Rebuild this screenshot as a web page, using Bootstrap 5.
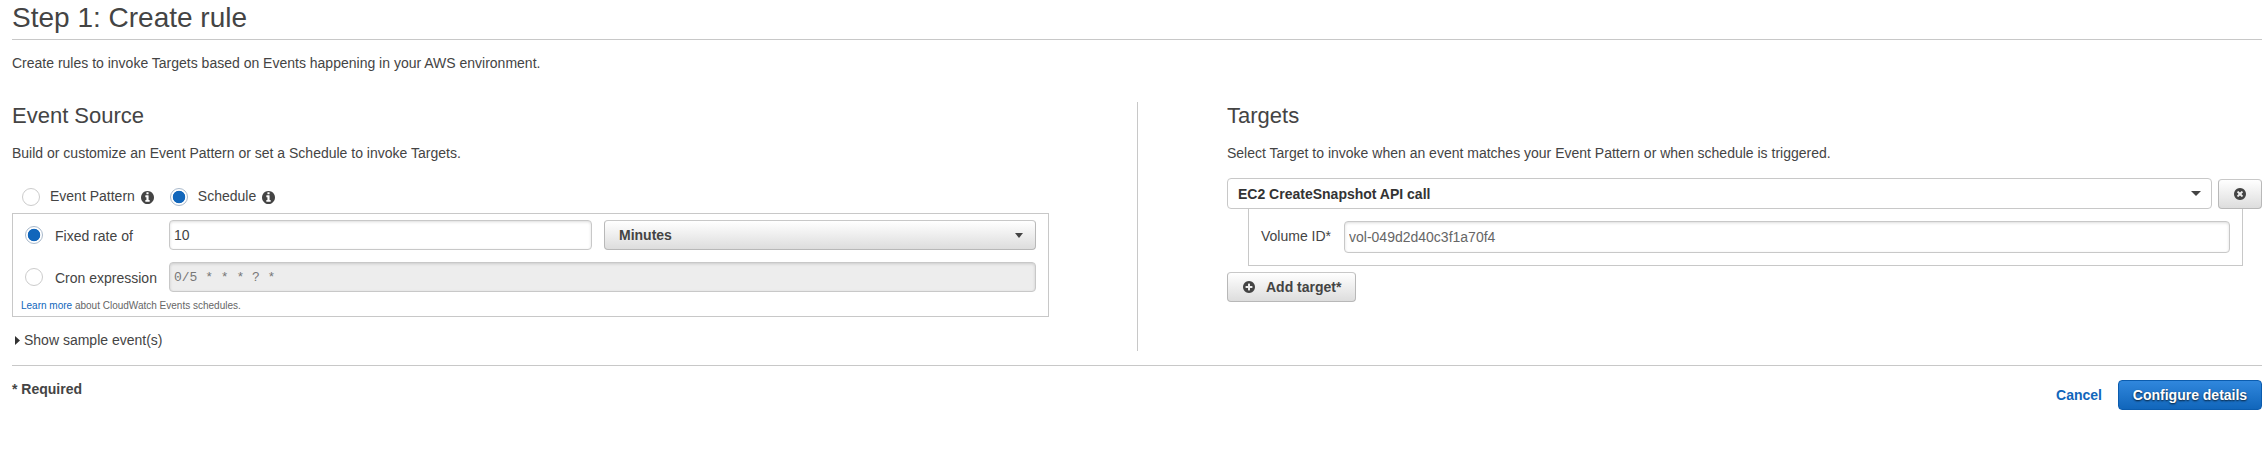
<!DOCTYPE html>
<html lang="en">
<head>
<meta charset="utf-8">
<meta name="viewport" content="width=device-width, initial-scale=1">
<title>Step 1: Create rule</title>
<link href="https://cdn.jsdelivr.net/npm/bootstrap@5.3.0/dist/css/bootstrap.min.css" rel="stylesheet">
<script src="https://cdn.jsdelivr.net/npm/bootstrap@5.3.0/dist/js/bootstrap.bundle.min.js" defer></script>
<style>
body{font-family:"Liberation Sans",Arial,sans-serif;font-size:14px;line-height:20px;color:#444;background:#fff;padding:3px 6px 0 12px}
h1{font-size:28px;line-height:30px;font-weight:400;margin:0;padding-bottom:6px;border-bottom:1px solid #c8c8c8}
h2{font-size:22px;line-height:24px;font-weight:400;margin:0 0 15px}
p{margin:0}
.intro{margin:13px 0 29px}
.panes{height:249px}
.source-pane{width:1126px;padding:2px 88px 0 0;border-right:1px solid #c8c8c8;flex:none}
.target-pane{padding:2px 0 0 89px}
.mode-row{height:18px;margin:25px 0 7px 10px}
.mode-row label{margin:-2px 6px 0 10px}
.form-check-input.dot{width:18px;height:18px;margin:0;border:1px solid #ccc;flex:none;background-image:none;box-shadow:none}
.form-check-input.dot:checked{border-color:#a9b9cb;background:radial-gradient(circle,#1166bb 0 5.9px,#fff 6.6px)}
.mode-row .form-check-input.second{margin-left:16px}
.fa-ico{width:12px;height:12px;fill:currentColor;flex:none;display:block}
.mode-row .fa-ico{width:13px;height:13px}
.schedule{border:1px solid #c8c8c8;height:104px;padding:6px 12px 0}
.form-control.field{height:30px;padding:4px 4px;font-size:14px;line-height:20px;color:#444;border:1px solid #c8c8c8;border-radius:4px;box-shadow:inset 0 1px 3px rgba(0,0,0,.14)}
.form-control.field.cron{font-family:"Liberation Mono",monospace;font-size:13px}
.form-control.field:disabled{background:#ededed;color:#777}
.field-label{width:114px;flex:none;margin:2px 0 0 12px}
.btn.grad{height:30px;padding:4px 14px;font-size:14px;line-height:20px;font-weight:700;color:#444;border:1px solid #b8b8b8;border-top-color:#c8c8c8;border-radius:4px;background:linear-gradient(#fff,#ddd)}
.btn.unit{width:432px;flex:none;margin-left:12px;padding-right:12px}
.tri{width:8px;height:5px;fill:#444;display:block}
.tri.wide{width:10px}
.hint{font-size:10px;line-height:14px;color:#666;margin:7px 0 0 -4px}
.hint a,.cancel{color:#1166bb;text-decoration:none}
.sample{margin:13px 0 0 3px;gap:4px}
.btn.picker{height:31px;padding:4px 10px;font-size:14px;line-height:20px;font-weight:700;color:#333;border:1px solid #c8c8c8;border-radius:4px;background:#fff}
.btn.remove{width:44px;margin-left:6px;padding:0}
.volume{margin:0 19px 6px 21px;height:57px;border:1px solid #c8c8c8;border-top:0;padding:12px 12px 0}
.volume label{width:83px;margin-bottom:2px}
.form-control.field.tall{height:32px;padding:5px 4px;color:#666}
.btn.add{width:129px;padding:0 0 0 15px;gap:11px}
.foot{margin-top:14px;border-top:1px solid #c8c8c8;padding-top:14px}
.foot strong{margin-top:-1px}
.cancel{margin:5px 16px 0 0}
.btn.go{height:30px;width:144px;padding:4px 0;font-size:14px;line-height:20px;font-weight:700;color:#fff;border:1px solid #0b5cae;border-radius:4px;background:linear-gradient(#3087dd,#1166bb);text-shadow:0 1px 2px rgba(0,0,0,.8)}
</style>
</head>
<body>
<svg class="d-none">
  <defs>
    <symbol id="info" viewBox="128 128 1536 1536"><path d="M1152 1376v-160q0-14-9-23t-23-9h-96v-512q0-14-9-23t-23-9h-320q-14 0-23 9t-9 23v160q0 14 9 23t23 9h96v320h-96q-14 0-23 9t-9 23v160q0 14 9 23t23 9h448q14 0 23-9t9-23zM1024 480v-160q0-14-9-23t-23-9h-192q-14 0-23 9t-9 23v160q0 14 9 23t23 9h192q14 0 23-9t9-23zM1664 896q0 209-103 385.5t-279.5 279.5-385.5 103-385.5-103-279.5-279.5-103-385.5 103-385.5 279.5-279.5 385.5-103 385.5 103 279.5 279.5 103 385.5z"/></symbol>
    <symbol id="plus" viewBox="128 128 1536 1536"><path d="M1344 960v-128q0-26-19-45t-45-19h-256v-256q0-26-19-45t-45-19h-128q-26 0-45 19t-19 45v256h-256q-26 0-45 19t-19 45v128q0 26 19 45t45 19h256v256q0 26 19 45t45 19h128q26 0 45-19t19-45v-256h256q26 0 45-19t19-45zM1664 896q0 209-103 385.5t-279.5 279.5-385.5 103-385.5-103-279.5-279.5-103-385.5 103-385.5 279.5-279.5 385.5-103 385.5 103 279.5 279.5 103 385.5z"/></symbol>
    <symbol id="times" viewBox="128 128 1536 1536"><path d="M1277 1122q0-26-19-45l-181-181 181-181q19-19 19-45 0-27-19-46l-90-90q-19-19-46-19-26 0-45 19l-181 181-181-181q-19-19-45-19-27 0-46 19l-90 90q-19 19-19 46 0 26 19 45l181 181-181 181q-19 19-19 45 0 27 19 46l90 90q19 19 46 19 26 0 45-19l181-181 181 181q19 19 45 19 27 0 46-19l90-90q19-19 19-46zM1664 896q0 209-103 385.5t-279.5 279.5-385.5 103-385.5-103-279.5-279.5-103-385.5 103-385.5 279.5-279.5 385.5-103 385.5 103 279.5 279.5 103 385.5z"/></symbol>
  </defs>
</svg>

<h1>Step 1: Create rule</h1>
<p class="intro">Create rules to invoke Targets based on Events happening in your AWS environment.</p>

<main class="panes d-flex">
  <section class="source-pane">
    <h2>Event Source</h2>
    <p>Build or customize an Event Pattern or set a Schedule to invoke Targets.</p>
    <div class="mode-row d-flex align-items-center">
      <input class="form-check-input dot" type="radio" name="mode" id="pattern">
      <label for="pattern">Event Pattern</label>
      <svg class="fa-ico"><use href="#info"/></svg>
      <input class="form-check-input dot second" type="radio" name="mode" id="schedule" checked>
      <label for="schedule">Schedule</label>
      <svg class="fa-ico"><use href="#info"/></svg>
    </div>
    <div class="schedule">
      <div class="d-flex align-items-center">
        <input class="form-check-input dot" type="radio" name="kind" id="rate" checked>
        <label class="field-label" for="rate">Fixed rate of</label>
        <input class="form-control field" type="text" value="10" aria-label="Rate">
        <button class="btn grad unit d-flex align-items-center justify-content-between" type="button">Minutes<svg class="tri" viewBox="0 0 8 5"><path d="M0 0h8L4 5z"/></svg></button>
      </div>
      <div class="d-flex align-items-center" style="margin-top:12px">
        <input class="form-check-input dot" type="radio" name="kind" id="cron">
        <label class="field-label" for="cron">Cron expression</label>
        <input class="form-control field cron" type="text" value="0/5 * * * ? *" aria-label="Cron" disabled>
      </div>
      <p class="hint"><a href="#">Learn more</a> about CloudWatch Events schedules.</p>
    </div>
    <div class="sample d-flex align-items-center"><svg width="5" height="9" viewBox="0 0 5 9" fill="#333"><path d="M0 0l5 4.5L0 9z"/></svg><span>Show sample event(s)</span></div>
  </section>

  <section class="target-pane flex-grow-1">
    <h2>Targets</h2>
    <p>Select Target to invoke when an event matches your Event Pattern or when schedule is triggered.</p>
    <div class="d-flex align-items-end" style="margin-top:15px">
      <button class="btn picker flex-grow-1 d-flex align-items-center justify-content-between" type="button">EC2 CreateSnapshot API call<svg class="tri wide" viewBox="0 0 10 5"><path d="M0 0h10L5 5z"/></svg></button>
      <button class="btn grad remove d-flex align-items-center justify-content-center" type="button" aria-label="Remove"><svg class="fa-ico"><use href="#times"/></svg></button>
    </div>
    <div class="volume">
      <div class="d-flex align-items-center">
        <label for="vol" class="flex-shrink-0">Volume ID*</label>
        <input id="vol" class="form-control field tall" type="text" value="vol-049d2d40c3f1a70f4">
      </div>
    </div>
    <button class="btn grad add d-flex align-items-center" type="button"><svg class="fa-ico"><use href="#plus"/></svg>Add target*</button>
  </section>
</main>

<footer class="foot d-flex justify-content-between align-items-start">
  <strong>* Required</strong>
  <div class="d-flex align-items-start">
    <a class="cancel fw-bold" href="#">Cancel</a>
    <button class="btn go" type="button">Configure details</button>
  </div>
</footer>
</body>
</html>
